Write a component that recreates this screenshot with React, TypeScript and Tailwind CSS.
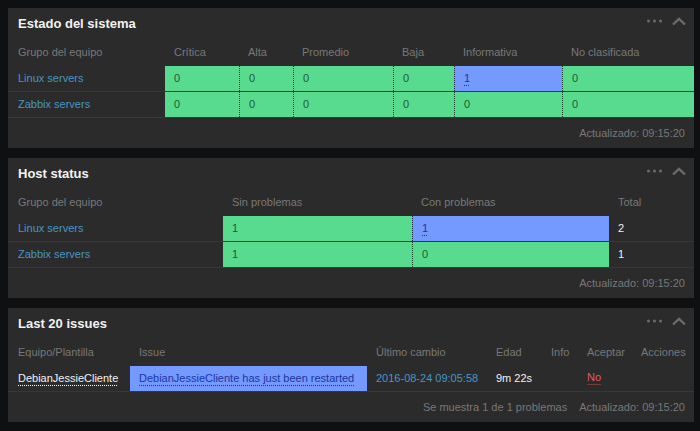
import React from "react";

function Dots() {
  return (
    <svg width="15" height="4" viewBox="0 0 15 4" className="block">
      <circle cx="1.5" cy="2" r="1.5" fill="#6b6b6b" />
      <circle cx="7.5" cy="2" r="1.5" fill="#6b6b6b" />
      <circle cx="13.5" cy="2" r="1.5" fill="#6b6b6b" />
    </svg>
  );
}

function Chevron() {
  return (
    <svg width="14" height="9" viewBox="0 0 14 9" className="block">
      <polyline points="1,7.5 7,1.8 13,7.5" fill="none" stroke="#6b6b6b" strokeWidth="2.4" />
    </svg>
  );
}

function Header({ title }: { title: string }) {
  return (
    <div className="h-[30px] flex items-center pl-[10px] pr-[8px]">
      <h4 className="flex-1 text-[13px] font-bold text-[#f2f2f2] leading-none">{title}</h4>
      <div className="flex items-center gap-[10px] -mt-[4px]">
        <Dots />
        <Chevron />
      </div>
    </div>
  );
}

function Footer({ children }: { children: React.ReactNode }) {
  return (
    <div className="h-[30px] flex items-center justify-end gap-[12px] pr-[9px] text-[#787878]">
      {children}
    </div>
  );
}

const green = "bg-[#59db8f] text-[#1d5a34]";
const sep = "border-l border-dotted border-black/70 pl-[8px]";

function Panel({ children }: { children: React.ReactNode }) {
  return <div className="bg-[#2b2b2b]">{children}</div>;
}

export default function App() {
  const cols1 = "grid grid-cols-[157px_74px_54px_100px_61px_108px_1fr]";
  const cols2 = "grid grid-cols-[215px_189px_197px_1fr]";
  const cols3 = "grid grid-cols-[122px_237px_120px_55px_36px_54px_1fr]";
  const th = "h-[28px] items-center text-[#787878]";
  const row = "h-[26px] border-b border-[#383838]";
  const cell = "flex items-center pl-[9px]";
  return (
    <div className="min-h-[431px] bg-[#0e1012] pl-[8px] pr-[6px] pt-[8px] pb-[9px] flex flex-col gap-[10px] font-['Liberation_Sans',Arial,sans-serif] text-[11px] leading-none">
      <Panel>
        <Header title="Estado del sistema" />
        <div className={`${cols1} ${th}`}>
          <div className="pl-[10px]">Grupo del equipo</div>
          <div className="pl-[9px]">Crítica</div>
          <div className="pl-[9px]">Alta</div>
          <div className="pl-[9px]">Promedio</div>
          <div className="pl-[9px]">Baja</div>
          <div className="pl-[9px]">Informativa</div>
          <div className="pl-[9px]">No clasificada</div>
        </div>
        {[
          { name: "Linux servers", info: true },
          { name: "Zabbix servers", info: false },
        ].map((r) => (
          <div key={r.name} className={`${cols1} ${row}`}>
            <div className="flex items-center pl-[10px] text-[#4796c4]">{r.name}</div>
            <div className={`${cell} ${green}`}>0</div>
            <div className={`${cell} ${green} ${sep}`}>0</div>
            <div className={`${cell} ${green} ${sep}`}>0</div>
            <div className={`${cell} ${green} ${sep}`}>0</div>
            {r.info ? (
              <div className={`${cell} bg-[#7499ff] ${sep}`}>
                <span className="text-[#1c36a3] underline decoration-dotted underline-offset-[3px]">1</span>
              </div>
            ) : (
              <div className={`${cell} ${green} ${sep}`}>0</div>
            )}
            <div className={`${cell} ${green} ${sep}`}>0</div>
          </div>
        ))}
        <Footer>
          <span>Actualizado: 09:15:20</span>
        </Footer>
      </Panel>

      <Panel>
        <Header title="Host status" />
        <div className={`${cols2} ${th}`}>
          <div className="pl-[10px]">Grupo del equipo</div>
          <div className="pl-[9px]">Sin problemas</div>
          <div className="pl-[9px]">Con problemas</div>
          <div className="pl-[9px]">Total</div>
        </div>
        <div className={`${cols2} ${row}`}>
          <div className="flex items-center pl-[10px] text-[#4796c4]">Linux servers</div>
          <div className={`${cell} ${green}`}>1</div>
          <div className={`${cell} bg-[#7499ff] ${sep}`}>
            <span className="text-[#1c36a3] underline decoration-dotted underline-offset-[3px]">1</span>
          </div>
          <div className={`${cell} text-[#f2f2f2]`}>2</div>
        </div>
        <div className={`${cols2} ${row}`}>
          <div className="flex items-center pl-[10px] text-[#4796c4]">Zabbix servers</div>
          <div className={`${cell} ${green}`}>1</div>
          <div className={`${cell} ${green} ${sep}`}>0</div>
          <div className={`${cell} text-[#f2f2f2]`}>1</div>
        </div>
        <Footer>
          <span>Actualizado: 09:15:20</span>
        </Footer>
      </Panel>

      <Panel>
        <Header title="Last 20 issues" />
        <div className={`${cols3} ${th}`}>
          <div className="pl-[10px]">Equipo/Plantilla</div>
          <div className="pl-[9px]">Issue</div>
          <div className="pl-[9px]">Último cambio</div>
          <div className="pl-[9px]">Edad</div>
          <div className="pl-[9px]">Info</div>
          <div className="pl-[9px]">Aceptar</div>
          <div className="pl-[9px]">Acciones</div>
        </div>
        <div className={`${cols3} ${row}`}>
          <div className="flex items-center pl-[10px] text-[#f2f2f2]">
            <span className="underline decoration-dotted underline-offset-[3px]">DebianJessieCliente</span>
          </div>
          <div className={`${cell} bg-[#7499ff]`}>
            <span className="text-[#1c36a3] underline decoration-dotted underline-offset-[3px] whitespace-nowrap">
              DebianJessieCliente has just been restarted
            </span>
          </div>
          <div className={`${cell} text-[#4796c4] whitespace-nowrap`}>2016-08-24 09:05:58</div>
          <div className={`${cell} text-[#f2f2f2] whitespace-nowrap`}>9m 22s</div>
          <div className={cell}></div>
          <div className={cell}>
            <span className="text-[#e45959] border-b border-[#e45959]/40 pb-[1px]">No</span>
          </div>
          <div className={cell}></div>
        </div>
        <Footer>
          <span>Se muestra 1 de 1 problemas</span>
          <span>Actualizado: 09:15:20</span>
        </Footer>
      </Panel>
    </div>
  );
}
